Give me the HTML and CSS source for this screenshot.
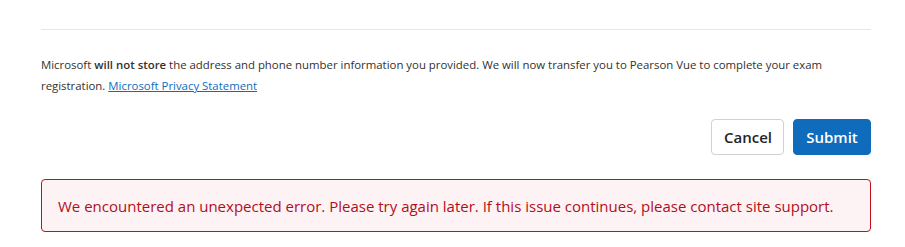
FILE: index.html
```html
<!DOCTYPE html>
<html lang="en">
<head>
<meta charset="utf-8">
<title>Exam registration</title>
<link rel="stylesheet" href="styles.css">
</head>
<body>
<div class="page">
  <hr class="divider">
  <p class="notice">Microsoft <strong>will not store</strong> the address and phone number information you provided. We will now transfer you to Pearson Vue to complete your exam registration. <a href="#" class="link">Microsoft Privacy Statement</a></p>
  <div class="actions">
    <button class="btn btn-secondary" type="button">Cancel</button>
    <button class="btn btn-primary" type="button">Submit</button>
  </div>
  <div class="alert">We encountered an unexpected error. Please try again later. If this issue continues, please contact site support.</div>
</div>
</body>
</html>
```
FILE: styles.css
```css
html, body {
  margin: 0;
  padding: 0;
  background: #fff;
}
body {
  font-family: "Open Sans", "Noto Sans", sans-serif;
  color: #323130;
}
.page {
  width: 830px;
  padding: 29px 0 0 41px;
}
.divider {
  margin: 0;
  border: 0;
  border-top: 1px solid #e6e6e6;
}
.notice {
  margin: 24px 0 0 0;
  font-size: 11.4px;
  line-height: 21px;
  color: #323130;
}
.notice strong {
  font-weight: 600;
}
.link {
  color: #0f6cbd;
  text-decoration: underline;
}
.actions {
  display: flex;
  justify-content: flex-end;
  gap: 9px;
  margin-top: 23px;
}
.btn {
  height: 36px;
  padding: 0 12px;
  border-radius: 4px;
  font-family: inherit;
  font-size: 15px;
  font-weight: 600;
  cursor: pointer;
}
.btn-secondary {
  background: #fff;
  color: #242424;
  border: 1px solid #d1d1d1;
  width: 73px;
}
.btn-primary {
  background: #0f6cbd;
  color: #fff;
  border: 1px solid #0f6cbd;
  width: 78px;
}
.alert {
  margin-top: 24px;
  height: 53px;
  box-sizing: border-box;
  display: flex;
  align-items: center;
  padding: 0 16px;
  border: 1px solid #c50f1f;
  border-radius: 4px;
  background: #fdf3f4;
  color: #b10e1c;
  font-size: 15px;
}
```
